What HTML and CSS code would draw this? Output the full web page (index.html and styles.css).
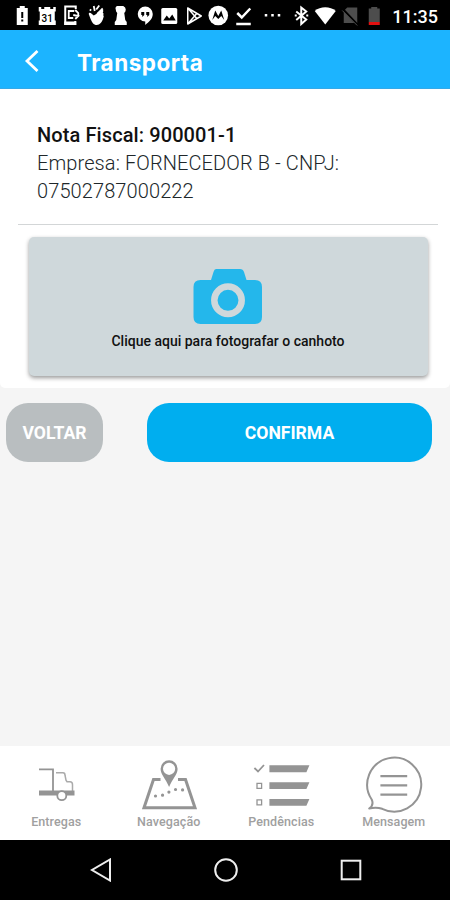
FILE: index.html
```html
<!DOCTYPE html>
<html lang="pt-BR">
<head>
    <meta charset="UTF-8">
    <meta name="viewport" content="width=device-width, initial-scale=1.0">
    <title>Transporta</title>
    <link rel="stylesheet" href="styles.css">
</head>
<body>
    <div class="status-bar">
        <svg viewBox="0 0 24 24"><path fill="#fff" d="M6.500 5h3V3h5v2h3v17h-11z"/><path stroke="#000" stroke-width="2" d="M12 9v6M12 16.500v2"/></svg>
        <svg viewBox="0 0 24 24"><path fill="#fff" d="M3.500 4h2.500v2h3V4h6v2h3V4h2.500v4.500h-1v9h1V22h-17v-4.500h1v-9h-1z"/><text x="12" y="18.500" text-anchor="middle" class="day">31</text></svg>
        <svg viewBox="0 0 24 24"><path fill="none" stroke="#fff" stroke-width="2" d="M16.500 6V3.500H6v17.500h10v-3"/><path fill="#fff" d="M5 18.500h12V22H5z"/><path fill="none" stroke="#fff" stroke-width="1.800" d="M15 8h-5.500v7H14M14 12l5 1-3 3M16 7l3 3v3"/></svg>
        <svg viewBox="0 0 24 24"><path fill="#fff" d="M4.500 11q0-2 2-1l3 2.500 2.500-1.500 5.500-4.500q2 0 1.500 2l-.5 1q1.500 1 .5 2.500 1 1.500 0 3c-1 4-3.500 7-6.500 7s-5-2-8-11z"/><path stroke="#fff" stroke-width="1.800" d="M5.500 6.500l1.500 1M9.500 3l1 5M15 2.500l-3 4M18.500 5.500L13 11"/></svg>
        <svg viewBox="0 0 24 24"><path fill="#fff" d="M9 3h6q2.500 1 2.500 3.500 0 2-1.500 3.500l1 7 1.500 2v3h-12v-3l1.500-2 1-7q-1.500-1.500-1.500-3.500Q6.500 4 9 3z"/></svg>
        <svg viewBox="0 0 24 24"><path fill="#fff" d="M12 3.500a7.500 7.500 0 0 1 7.500 7.500c0 5-4 8-7.500 11v-3.500a7.500 7.500 0 0 1 0-15z"/><path fill="#000" d="M8 9h3v3l-2 2v-2H8zM13 9h3v3l-2 2v-2h-1z"/></svg>
        <svg viewBox="0 0 24 24"><rect x="4" y="5" width="16" height="16" rx="1.500" fill="#fff"/><path fill="#000" d="M6 17.500l3.500-5 2.500 3 3-4 3.500 6z"/></svg>
        <svg viewBox="0 0 24 24"><path fill="none" stroke="#fff" stroke-width="1.500" stroke-linejoin="round" d="M5.500 5v16L19 13zM5.500 5l9 10.500M5.500 21l9-10.500"/></svg>
        <svg viewBox="0 0 24 24"><circle cx="12" cy="12.500" r="9.800" fill="#fff"/><path fill="#000" d="M6 17L9 7.500l3 5.500 3-5.500 3 9.500-3-4-3 3-3-3z"/></svg>
        <svg viewBox="0 0 24 24"><path fill="none" stroke="#fff" stroke-width="2.500" d="M6 10l4.500 4.500L19 5.500M5 21h14.500"/></svg>
        <svg class="more" viewBox="0 0 24 24"><path fill="#fff" d="M4.500 11h2.500v2.500H4.500zM11 11h2.500v2.500H11zM17.500 11H20v2.500h-2.500z"/></svg>
        <svg viewBox="0 0 24 24"><path fill="none" stroke="#fff" stroke-width="2" d="M7 8.500l10 8-5 4.500V4.500l5 4-10 8.500"/><path fill="#fff" d="M5.500 11.500h2v2h-2zM17 11.500h2v2h-2z"/></svg>
        <svg viewBox="0 0 24 24"><path fill="#fff" d="M12 21.500L1.500 8C7 3 17 3 22.500 8z"/></svg>
        <svg viewBox="0 0 24 24"><path fill="#4d4d4d" d="M9 4.500h10V20H5.500V8z"/><path stroke="#000" stroke-width="2.200" d="M4 5.500l16 17"/><path stroke="#4d4d4d" stroke-width="1" d="M4 7.500l15 15"/></svg>
        <svg viewBox="0 0 24 24"><path fill="#4d4d4d" d="M6.500 5.500H9V4h6v1.500h2.500V19h-11z"/><path fill="#e01010" d="M6.500 19h11v3h-11z"/></svg>
        <span class="clock">11:35</span>
    </div>

    <header class="header">
        <svg class="back" viewBox="0 0 16 24"><path d="M13.500 2L3 12l10.500 10"/></svg>
        <h1>Transporta</h1>
    </header>

    <main class="content">
        <section class="card">
            <div class="invoice">
                <strong>Nota Fiscal: 900001-1</strong>
                <p>Empresa: FORNECEDOR B - CNPJ: 07502787000222</p>
            </div>
            <div class="photo">
                <svg viewBox="0 0 70 56">
                    <path fill="#24b7eb" d="M23 0h24q3 0 4 3l2.500 8H62q7 0 7 7v30q0 7-7 7H7.500q-7 0-7-7V18q0-7 7-7H18l2.500-8q.8-3 2.500-3z"/>
                    <circle cx="35" cy="31.300" r="13.700" fill="none" stroke="#cfd8db" stroke-width="6.500"/>
                </svg>
                <span>Clique aqui para fotografar o canhoto</span>
            </div>
        </section>
        <div class="actions">
            <button type="button" class="btn btn-back">VOLTAR</button>
            <button type="button" class="btn btn-confirm">CONFIRMA</button>
        </div>
    </main>

    <nav class="tabs">
        <div class="tab">
            <svg viewBox="0 0 64 60">
                <path fill="none" stroke="#949494" stroke-width="1.800" d="M15 13.300h14V35"/>
                <path fill="none" stroke="#aaa" stroke-width="1.500" d="M32 16.700h7q2 0 2 2.500l1 5 1 1.500h3q2.500 0 2.500 3V35"/>
                <path fill="#949494" d="M15 34.500h35.500v5H15z"/>
                <circle cx="37.800" cy="39.700" r="4.500" fill="#fff" stroke="#949494" stroke-width="1.800"/>
            </svg>
            <span>Entregas</span>
        </div>
        <div class="tab">
            <svg viewBox="0.500 0 64 60">
                <path fill="none" stroke="#949494" stroke-width="3" d="M24 23.500h-7L7.500 51.800h51L49 23.500h-7.500"/>
                <path fill="#949494" fill-rule="evenodd" d="M32.600 4.200a8.500 8.500 0 0 1 8.500 8.500c0 6-5.300 10-8.500 18.300-3.200-8.300-8.500-12.300-8.500-18.300a8.500 8.500 0 0 1 8.500-8.500zm0 2.500a6.100 6.100 0 1 0 0 12.200 6.100 6.100 0 0 0 0-12.200z"/>
                <path fill="none" stroke="#949494" stroke-width="3.200" stroke-linecap="round" stroke-dasharray="0 7.100" d="M19 40l7-.8 6.500-3.200 7-2.700 7 .7 4 3"/>
            </svg>
            <span>Navegação</span>
        </div>
        <div class="tab">
            <svg viewBox="0 0 64 60">
                <path fill="none" stroke="#949494" stroke-width="1.800" d="M5.400 12l3.600 3.500L15 9"/>
                <path fill="none" stroke="#949494" stroke-width="1.300" d="M8 27.300h4.600v5H8zM8 43.800h4.600v5H8z"/>
                <path fill="#949494" d="M20.400 9.200h40l-3 7h-37zM20.400 26.300h40l-3 6.700h-37zM20.400 43h40l-3 6.700h-37z"/>
            </svg>
            <span>Pendências</span>
        </div>
        <div class="tab">
            <svg viewBox="0.800 0 64 60">
                <path fill="none" stroke="#949494" stroke-width="2" stroke-linejoin="round" d="M10.500 43.500a27 27 0 1 1 10.500 9.300q-6-2-13-.3 5-3.500 2.500-9z"/>
                <path stroke="#949494" stroke-width="2.200" d="M19.200 20.200H46M19.200 29.400H46M19.200 38.700H46"/>
            </svg>
            <span>Mensagem</span>
        </div>
    </nav>

    <div class="system-nav">
        <svg viewBox="0 0 24 24"><path d="M21 1.500v21L3 12z"/></svg>
        <svg viewBox="0 0 24 24"><circle cx="12" cy="12" r="10.800"/></svg>
        <svg viewBox="0 0 24 24"><rect x="2.700" y="2.700" width="18.600" height="18.600"/></svg>
    </div>
</body>
</html>
```

FILE: styles.css
```css
* {
    box-sizing: border-box;
}
body {
    margin: 0;
    height: 900px;
    display: flex;
    flex-direction: column;
    background-color: #f5f5f5;
    font-family: Roboto, sans-serif;
    overflow: hidden;
}
.status-bar {
    height: 30px;
    padding: 0 12px 0 10px;
    display: flex;
    align-items: center;
    background-color: #000;
}
.status-bar svg {
    width: 24.5px;
    height: 24px;
    flex: none;
}
.status-bar .more {
    margin: 0 4px 0 5px;
}
.day {
    font-size: 10px;
    font-weight: 500;
    fill: #000;
}
.clock {
    margin-left: auto;
    padding-top: 2px;
    color: #fff;
    font-size: 18px;
    font-weight: 500;
}
.header {
    height: 59px;
    padding: 3px 24px 0;
    display: flex;
    align-items: center;
    background-color: #1cb4ff;
    border-bottom: 1px solid #35a9e8;
}
.back {
    width: 16px;
    height: 24px;
}
.back path {
    fill: none;
    stroke: #fff;
    stroke-width: 2.8;
}
h1 {
    margin: 4px 0 0 37px;
    color: #fff;
    font-family: Inter, sans-serif;
    font-size: 22.5px;
    font-weight: 700;
    line-height: 28px;
    letter-spacing: 0.5px;
}
.content {
    flex: 1;
}
.card {
    height: 299px;
    padding: 0 12px 0 18px;
    background-color: #fff;
    border-radius: 0 0 5px 5px;
}
.invoice {
    height: 136px;
    padding: 32px 60px 0 19px;
    border-bottom: 1px solid #d3d6d7;
    color: #20272a;
    font-size: 20px;
    line-height: 28px;
    letter-spacing: 0.1px;
}
.invoice strong {
    display: block;
    font-weight: 500;
    color: #111;
}
.invoice p {
    margin: 0;
    font-weight: 300;
}
.photo {
    height: 139px;
    margin: 12px 10.5px 0;
    padding-top: 32px;
    display: flex;
    flex-direction: column;
    align-items: center;
    background-color: #cfd8db;
    border-radius: 5px;
    box-shadow: 0 2px 4px rgba(0, 0, 0, 0.4);
}
.photo svg {
    width: 70px;
    height: 56px;
}
.photo span {
    margin-top: 7px;
    color: #111;
    font-size: 14px;
    font-weight: 500;
    line-height: 18px;
}
.actions {
    display: flex;
    justify-content: space-between;
    padding: 15px 18px 0 6px;
}
.btn {
    height: 59px;
    padding: 0;
    border: none;
    border-radius: 22px;
    color: #fff;
    font-family: Roboto, sans-serif;
    font-size: 17.6px;
    font-weight: 700;
}
.btn-back {
    width: 97px;
    background-color: #b9bec0;
}
.btn-confirm {
    width: 285px;
    background-color: #00aeef;
}
.tabs {
    height: 94px;
    padding-top: 10px;
    display: flex;
    background-color: #fff;
}
.tab {
    flex: 1;
    display: flex;
    flex-direction: column;
    align-items: center;
}
.tab svg {
    width: 64px;
    height: 60px;
}
.tab span {
    margin-top: -1px;
    color: #a0a0a0;
    font-size: 12.5px;
    font-weight: 500;
    line-height: 14px;
    letter-spacing: 0.1px;
}
.system-nav {
    height: 60px;
    padding: 0 37px 0 38px;
    display: flex;
    justify-content: space-around;
    align-items: center;
    background-color: #000;
}
.system-nav svg {
    width: 24px;
    height: 24px;
    fill: none;
    stroke: #eee;
    stroke-width: 2;
}
```
